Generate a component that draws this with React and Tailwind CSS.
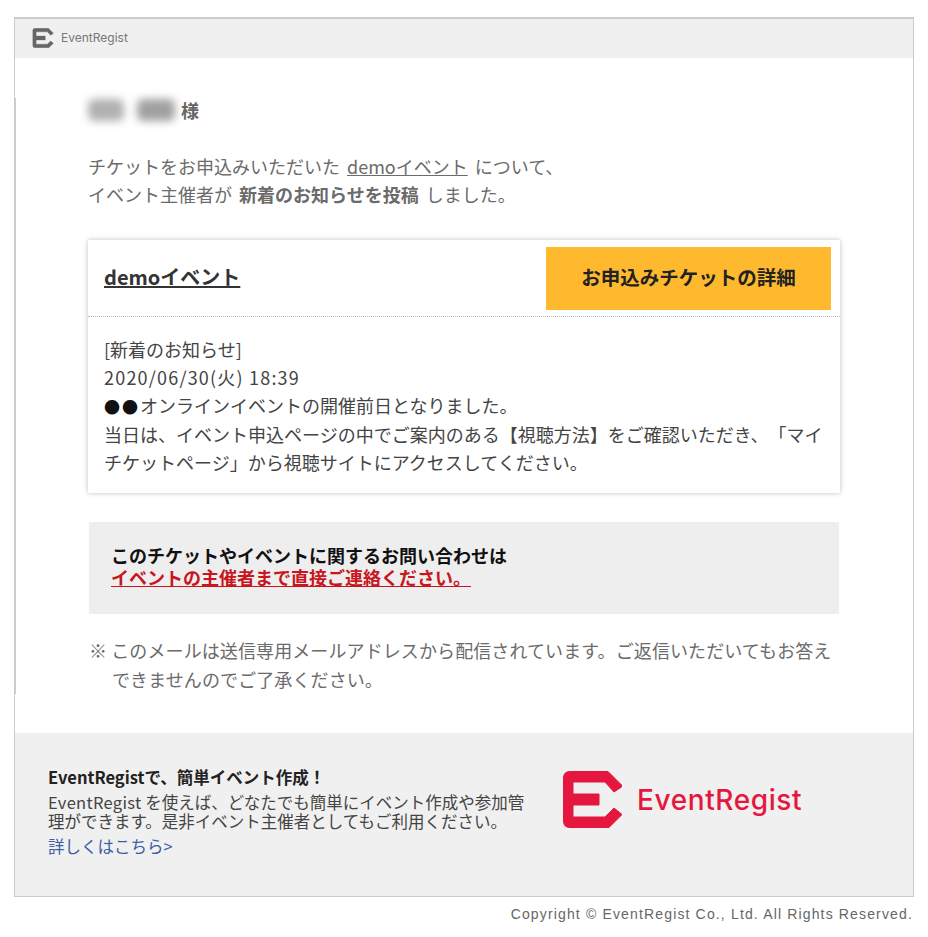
const font = { fontFamily: '"Noto Sans CJK JP", sans-serif' };

const LogoMark = ({ className, color }) => {
  return (
    <svg className={className} viewBox="0 0 59 57" fill={color} stroke={color} strokeWidth="1" strokeLinejoin="round">
      <path d="M7 .5H45L58.5 14V16L51 21L42 11H10V23H36V34H10V46H42L51 37L58.5 43V44L46 56.5H7Q.5 56.5 .5 50V7Q.5 .5 7 .5Z" />
    </svg>
  );
};

const Header = () => {
  return (
    <div className="flex h-[39px] items-center bg-[#f0f0f0] pb-[2px] pl-[16px]">
      <LogoMark className="h-[20px] w-[24px]" color="#666666" />
      <span className="ml-[6px] text-[12px] text-[#777] [font-family:Inter,sans-serif]">EventRegist</span>
    </div>
  );
};

const Ticket = () => {
  return (
    <div className="mt-[32px] w-[752px] bg-white shadow-[0_0_5px_rgba(0,0,0,0.25)]">
      <div className="flex h-[77px] items-center justify-between border-b border-dotted border-[#bbb] pl-[16px] pr-[9px]">
        <a className="-mt-[3px] text-[20px] font-bold text-[#333] underline">demoイベント</a>
        <div className="flex h-[63px] w-[285px] items-center justify-center bg-[#ffb92e] pb-[3px] text-[19.5px] font-bold text-[#222]">
          お申込みチケットの詳細
        </div>
      </div>
      <div className="pb-[17px] pl-[16px] pr-[14px] pt-[18px] text-[18px] leading-[28px] text-[#444]">
        <p>[新着のお知らせ]</p>
        <p className="tracking-[1.2px]">2020/06/30(火) 18:39</p>
        <p><span className="text-[16px] tracking-[2px] text-[#111]">●●</span>オンラインイベントの開催前日となりました。</p>
        <p>当日は、イベント申込ページの中でご案内のある【視聴方法】をご確認いただき、「マイチケットページ」から視聴サイトにアクセスしてください。</p>
      </div>
    </div>
  );
};

const Footer = () => {
  return (
    <div className="mt-[39px] flex h-[163px] bg-[#f0f0f0] pl-[33px] pt-[35px]">
      <div className="w-[484px] text-[16.5px] leading-[19px] text-[#444]">
        <p className="mb-[6px] font-bold text-[#222]">EventRegistで、簡単イベント作成！</p>
        <p><span className="tracking-[0.3px]">EventRegist</span> を使えば、どなたでも簡単にイベント作成や参加管理ができます。是非イベント主催者としてもご利用ください。</p>
        <a className="mt-[6px] block text-[#3c5da8]">詳しくはこちら&gt;</a>
      </div>
      <div className="ml-[31px] mt-[3px] flex h-[57px] items-center">
        <LogoMark className="h-[57px] w-[59px]" color="#e5173f" />
        <span className="ml-[15px] text-[28px] font-medium tracking-[0.6px] text-[#e5173f] [font-family:Inter,sans-serif]">EventRegist</span>
      </div>
    </div>
  );
};

export default function App() {
  return (
    <div className="min-h-[937px] bg-white pl-[14px] pt-[17px] [text-spacing-trim:space-all]" style={font}>
      <div className="w-[900px] border border-t-2 border-[#ccc]">
        <Header />
        <div className="border-l border-[#ccc] pl-[72px]">
          <div className="mt-[40px] flex h-[24px] items-center">
            <div className="h-[22px] w-[36px] rounded-md bg-[#b0b0b0] blur-[4px]" />
            <div className="ml-[13px] h-[22px] w-[38px] rounded-md bg-[#a0a0a0] blur-[4px]" />
            <span className="ml-[6px] text-[18px] font-bold text-[#666]">様</span>
          </div>
          <p className="mt-[30px] text-[18px] leading-[28px] text-[#6b6b6b] [word-spacing:3px]">
            チケットをお申込みいただいた <a className="underline">demoイベント</a> について、
            <br />
            イベント主催者が <b>新着のお知らせを投稿</b> しました。
          </p>
          <Ticket />
          <div className="ml-[1px] mt-[29px] flex h-[92px] w-[750px] flex-col justify-center bg-[#eee] pb-[4px] pl-[22px] text-[18px] font-bold leading-[22px]">
            <p className="text-[#111]">このチケットやイベントに関するお問い合わせは</p>
            <a className="w-[360px] text-[#c9151e] underline">イベントの主催者まで直接ご連絡ください。</a>
          </div>
          <p className="ml-[1px] mt-[22px] w-[750px] pl-[23px] -indent-[23px] text-[18px] leading-[29px] tracking-[0.1px] text-[#6b6b6b]">
            ※ このメールは送信専用メールアドレスから配信されています。ご返信いただいてもお答えできませんのでご了承ください。
          </p>
        </div>
        <Footer />
      </div>
      <p className="mt-[7px] w-[899px] text-right text-[14px] tracking-[1.15px] text-[#666] [font-family:'Liberation_Sans',sans-serif]">
        Copyright © EventRegist Co., Ltd. All Rights Reserved.
      </p>
    </div>
  );
}
